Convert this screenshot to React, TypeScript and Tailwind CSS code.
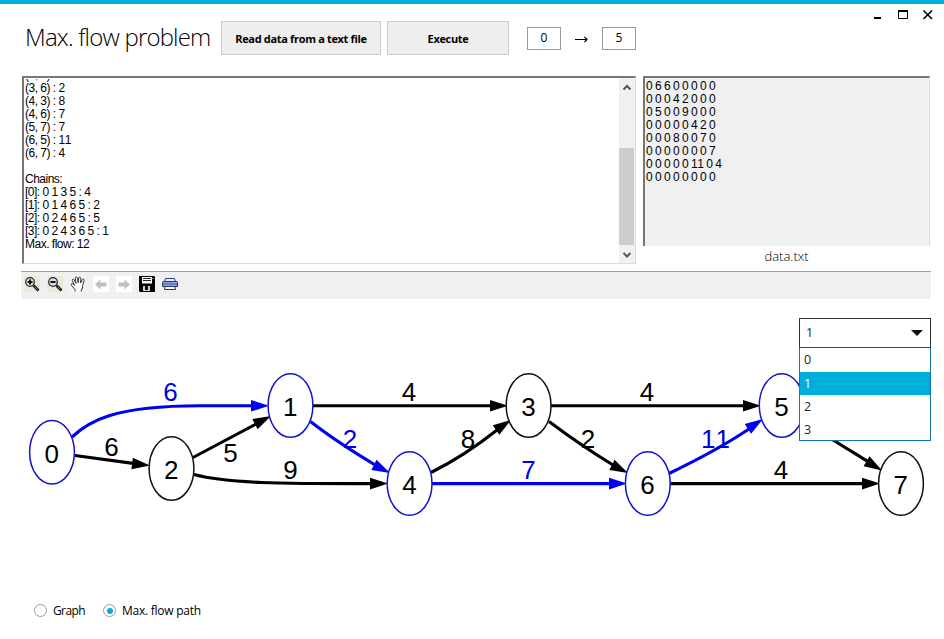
import type { ReactNode } from "react";

const BLUE = "#0000e6";
const INK = "#000000";

const log = [
  "(3, 5) : 4",
  "(3, 6) : 2",
  "(4, 3) : 8",
  "(4, 6) : 7",
  "(5, 7) : 7",
  "(6, 5) : 11",
  "(6, 7) : 4",
  "",
  "Chains:",
  "[0]: 0 1 3 5 : 4",
  "[1]: 0 1 4 6 5 : 2",
  "[2]: 0 2 4 6 5 : 5",
  "[3]: 0 2 4 3 6 5 : 1",
  "Max. flow: 12",
];

const matrix = [
  "0 6 6 0 0 0 0 0",
  "0 0 0 4 2 0 0 0",
  "0 5 0 0 9 0 0 0",
  "0 0 0 0 0 4 2 0",
  "0 0 0 8 0 0 7 0",
  "0 0 0 0 0 0 0 7",
  "0 0 0 0 0 11 0 4",
  "0 0 0 0 0 0 0 0",
];

type GraphNode = { id: number; x: number; y: number; active: boolean };
const nodes: GraphNode[] = [
  { id: 0, x: 52, y: 452.3, active: true },
  { id: 1, x: 290.5, y: 405.5, active: true },
  { id: 2, x: 171.5, y: 468.5, active: false },
  { id: 3, x: 528.6, y: 405.5, active: false },
  { id: 4, x: 409.6, y: 483.5, active: true },
  { id: 5, x: 781.7, y: 405.5, active: true },
  { id: 6, x: 647.8, y: 483.5, active: true },
  { id: 7, x: 901, y: 483.5, active: false },
];

// Each edge: line, arrow tip, arrow heading in degrees, label and its baseline.
type Edge = { d: string; tip: [number, number]; angle: number; label?: string; at?: [number, number]; active?: boolean };
const edges: Edge[] = [
  { d: "M72 437C88 422 112 405.8 200 405.8H254", tip: [269, 405.8], angle: 0, label: "6", at: [170.5, 401], active: true },
  { d: "M75 455.5L135 463.6", tip: [150, 465.6], angle: 7, label: "6", at: [111.5, 456] },
  { d: "M193 457.5L256 424", tip: [271, 416], angle: -27, label: "5", at: [230.5, 462] },
  { d: "M194 474.5C228 483.5 280 483.6 374 483.6", tip: [388, 483.6], angle: 0, label: "9", at: [290.5, 479] },
  { d: "M313 405.8H493", tip: [508, 405.8], angle: 0, label: "4", at: [409, 401] },
  { d: "M310.500 421.500C330 437 352 451 376 465.500", tip: [390, 473], angle: 27, label: "2", at: [350, 448], active: true },
  { d: "M431 472.500C458 459 477 446 497 430", tip: [511, 420], angle: -34, label: "8", at: [468, 448] },
  { d: "M432 483.6H612", tip: [627, 483.6], angle: 0, label: "7", at: [528.5, 479], active: true },
  { d: "M551 405.8H746", tip: [761, 405.8], angle: 0, label: "4", at: [647, 401] },
  { d: "M549 421.500C571 438 590 451 613 465", tip: [628, 473], angle: 27, label: "2", at: [588, 448] },
  { d: "M669 473.500C697 460 725 445 749 429", tip: [763, 419], angle: -33, label: "11", at: [715.5, 448], active: true },
  { d: "M670 483.6H865", tip: [880, 483.6], angle: 0, label: "4", at: [781, 479] },
  { d: "M804 421.500C826 436 846 448 868 461.500", tip: [882, 470.500], angle: 31 },
];

function Graph() {
  return (
    <svg className="block h-[291px] w-[944px] [font-kerning:none]" viewBox="0 299 944 291" fontFamily="'Liberation Sans', Arial, sans-serif" fontSize="26" textAnchor="middle">
      {edges.map((e, i) => {
        const color = e.active ? "#0000f0" : INK;
        return (
          <g key={i} fill={color}>
            <path d={e.d} fill="none" stroke={color} strokeWidth="3.100" />
            <path d="M0 0L-18 -5.800V5.800Z" transform={`translate(${e.tip[0]} ${e.tip[1]}) rotate(${e.angle})`} />
            {e.label && e.at && <text x={e.at[0]} y={e.at[1]} fill={e.active ? BLUE : INK}>{e.label}</text>}
          </g>
        );
      })}
      {nodes.map((n) => (
        <g key={n.id}>
          <ellipse cx={n.x} cy={n.y} rx="22.400" ry="31.800" fill="#fff" stroke={n.active ? "#1414c8" : "#111"} strokeWidth="1.500" />
          <text x={n.x - 0.2} y={n.y + 10.5}>{n.id}</text>
        </g>
      ))}
    </svg>
  );
}

function Magnifier({ plus }: { plus?: boolean }) {
  return (
    <svg className="size-4 bg-[#ece9d8]" viewBox="0 0 16 16">
      <circle cx="6" cy="6" r="4.300" fill="#d9dee2" stroke="#222" strokeWidth="1.200" />
      <path d="M3.500 6H8.500" stroke="#000" strokeWidth="1.800" />
      {plus && <path d="M6 3.500V8.500" stroke="#000" strokeWidth="1.800" />}
      <path d="M9.500 9.500L14.500 14.500" stroke="#111" strokeWidth="2.600" />
      <path d="M10.500 10.500L13.500 13.500" stroke="#aaa" strokeWidth=".8" />
    </svg>
  );
}

function Hand() {
  return (
    <svg className="size-4 bg-[#f7f5ec]" viewBox="0 0 16 16">
      <path d="M5 15.500V13.500L1.200 9C.3 7.800 2 7 3 8L4.500 9.300L2.300 4.500C2 3 3.700 2.600 4.300 4L6 7.300L5.300 2.200C5.300 .7 7.200 .6 7.500 2.200L8.200 6.800L8.700 2C9 .6 10.800 .8 10.800 2.300L10.600 7L12.300 3.700C13 2.500 14.700 3.100 14.200 4.500L12.600 9.500V12L11.300 14V15.500" fill="#fff" stroke="#333" />
    </svg>
  );
}

function Arrow({ flip }: { flip?: boolean }) {
  return (
    <svg className="size-4 bg-white" viewBox="0 0 16 16">
      <path d="M2 8.500L7.500 3.500V6.500H13.500V10.500H7.500V13.500Z" fill="#c0c0c0" transform={flip ? "translate(16 0) scale(-1 1)" : undefined} />
    </svg>
  );
}

function Disk() {
  return (
    <svg className="size-4" viewBox="0 0 16 16">
      <path d="M0 0H15L16 1V16H1L0 15Z" fill="#050505" />
      <path d="M3 1H13V7.500H3Z" fill="#fff" />
      <path d="M4 2.500H12M4 4.500H12" stroke="#222" />
      <path d="M4 10H11V15H4Z" fill="#d0d0d0" />
      <path d="M6 10H9V14H6Z" fill="#111" />
      <path d="M14 2V3" stroke="#fff" />
    </svg>
  );
}

function Printer() {
  return (
    <svg className="size-4" viewBox="0 0 16 16">
      <path d="M3.500 2.500H12.500L13.500 6H2.500Z" fill="#eef3fa" stroke="#2b3f80" />
      <path d="M1 5.500H15L15.500 6.500V10.500H.5V6.500Z" fill="#8faad2" stroke="#203575" />
      <path d="M1 8H15" stroke="#4060a0" />
      <path d="M3 10.500H13L13.500 13.500H2.500Z" fill="#fff" stroke="#203575" />
    </svg>
  );
}

function ValueBox({ children }: { children: ReactNode }) {
  return <div className="flex h-[23px] w-[34px] items-center justify-center border border-[#999] pb-0.5 text-[12px]">{children}</div>;
}

function Radio({ checked }: { checked?: boolean }) {
  return (
    <span className="flex size-[13px] items-center justify-center rounded-full border border-[#999] bg-white">
      {checked && <span className="size-[6px] rounded-full bg-[#00aedb]" />}
    </span>
  );
}

export default function App() {
  return (
    <div className="flex h-[639px] w-[944px] flex-col overflow-hidden border-t-4 border-[#00aedb] bg-white font-['Open_Sans',sans-serif] text-black">
      <header className="flex h-[72px] items-start pl-[25px]">
        <h1 className="mt-[15px] w-[196px] whitespace-nowrap text-[24px] leading-[36px] font-light tracking-[-0.82px]">Max. flow problem</h1>
        <button className="mt-[17px] h-[34px] w-[160px] border border-[#ccc] bg-[#eee] pt-0.5 text-[11px] font-bold tracking-[-0.33px] whitespace-nowrap">Read data from a text file</button>
        <button className="mt-[17px] ml-1.5 h-[34px] w-[122px] border border-[#ccc] bg-[#eee] pt-0.5 text-[11px] font-bold tracking-[-0.33px]">Execute</button>
        <div className="mt-[23px] ml-[18px] flex items-center">
          <ValueBox>0</ValueBox>
          <div className="flex w-[41px] justify-center">
            <svg className="h-[9px] w-[13px]" viewBox="0 0 13 9"><path d="M0 5.500H12M9.500 3L12 5.500L9.500 8" fill="none" stroke="#000" strokeWidth="1.100" /></svg>
          </div>
          <ValueBox>5</ValueBox>
        </div>
        <div className="mt-[5px] mr-[11px] ml-auto flex items-center">
          <svg className="h-3 w-[60px]" viewBox="0 0 60 12">
            <path d="M1 9H8" stroke="#000" strokeWidth="2" />
            <path d="M25.500 2V9.500H34.500V2" fill="none" stroke="#000" />
            <path d="M25 2H35" stroke="#000" strokeWidth="2" />
            <path d="M50.500 1.500L59 10M59 1.500L50.500 10" stroke="#000" strokeWidth="1.600" />
          </svg>
        </div>
      </header>

      <section className="flex h-[195px] gap-[7px] pl-[22px] [font-kerning:none]">
        <div className="flex h-[188px] w-[614px] border-t-2 border-r border-b border-l-2 border-t-[#777] border-r-[#ddd] border-b-[#ddd] border-l-[#777]">
          <div className="mt-px flex flex-1 flex-col justify-end overflow-hidden pb-[12px] pl-px font-['Liberation_Sans',Arial,sans-serif] text-[12px] leading-[13px] tracking-[-0.5px] whitespace-pre">
            {log.map((line, i) => <div key={i} className="h-[13px] shrink-0">{line}</div>)}
          </div>
          <div className="flex w-[16px] flex-col items-center bg-[#f0f0f0]">
            <svg className="mt-[3px] h-3 w-2.5 shrink-0" viewBox="0 0 10 12"><path d="M1.500 8.500L5 5L8.500 8.500" fill="none" stroke="#555" strokeWidth="2" /></svg>
            <div className="mt-[55px] h-[97px] w-[15px] self-start bg-[#cdcdcd]" />
            <svg className="mt-1 h-3 w-2.500 shrink-0" viewBox="0 0 10 12"><path d="M1.500 4L5 7.500L8.500 4" fill="none" stroke="#555" strokeWidth="2" /></svg>
          </div>
        </div>
        <div className="w-[287px]">
          <div className="h-[170px] border-t-2 border-r border-l-2 border-t-[#777] border-r-[#ddd] border-l-[#777] bg-[#f0f0f0] pt-0.5 pl-px font-['Liberation_Sans',Arial,sans-serif] text-[12px] leading-[13px] tracking-[-0.5px] whitespace-pre">
            {matrix.map((row, i) => <div key={i}>{row}</div>)}
          </div>
          <div className="text-center text-[13px] leading-[21px] font-light">data.txt</div>
        </div>
      </section>

      <div className="ml-[21px] flex h-[28px] w-[910px] shrink-0 items-center gap-[7px] border-t border-[#a0a0a0] bg-[#f0f0f0] pb-[3px] pl-[3px]">
        <Magnifier plus />
        <Magnifier />
        <Hand />
        <Arrow />
        <Arrow flip />
        <Disk />
        <Printer />
      </div>

      <main className="relative h-[291px] shrink-0">
        <Graph />
        <div className="absolute top-[19px] left-[799px] w-[132px] text-[12.5px] text-[#222]">
          <div className="flex h-[29px] items-center justify-between border border-b-0 border-[#333] bg-white pr-[7px] pl-[6px]">
            <span>1</span>
            <svg className="h-1.5 w-3" viewBox="0 0 12 6"><path d="M0 0H12L6 6Z" fill="#111" /></svg>
          </div>
          <div className="h-[94px] border border-[#1676aa] border-t-[#174f72] bg-white leading-[23px]">
            <div className="h-[24px] pl-1">0</div>
            <div className="h-[23px] bg-[#00aedb] pl-1 text-white">1</div>
            <div className="h-[23px] pl-1">2</div>
            <div className="h-[22px] pl-1">3</div>
          </div>
        </div>
      </main>

      <footer className="flex items-center pt-3 pl-[34px] text-[12px] leading-[17px]">
        <label className="flex w-[69px] items-center gap-[6px] tracking-[-0.6px]"><Radio />Graph</label>
        <label className="flex items-center gap-[6px] tracking-[-0.25px]"><Radio checked />Max. flow path</label>
      </footer>
    </div>
  );
}
